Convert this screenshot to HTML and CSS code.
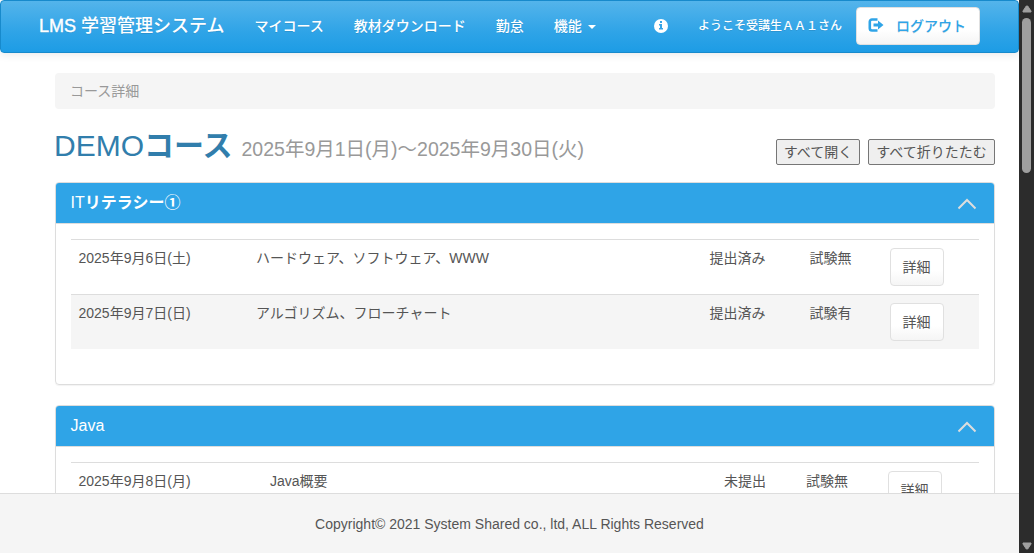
FILE: index.html
```html
<!DOCTYPE html>
<html lang="ja">
<head>
<meta charset="utf-8">
<title>コース詳細 | LMS 学習管理システム</title>
<link rel="stylesheet" href="styles.css">
</head>
<body>
<div class="page">
  <nav class="navbar">
    <a class="brand"><span class="brand-mark">LMS</span> 学習管理システム</a>
    <a class="nav-link">マイコース</a>
    <a class="nav-link">教材ダウンロード</a>
    <a class="nav-link">勤怠</a>
    <a class="nav-link">機能<span class="caret"></span></a>
    <div class="nav-right">
      <svg class="info" viewBox="0 0 14 14"><circle cx="7" cy="7" r="7" fill="#fff"/><path fill="#37a5e7" d="M6 2h2v2H6zM5 5h3v4h1v1.500H5V9h1V6.500H5z"/></svg>
      <span class="welcome">ようこそ受講生ＡＡ１さん</span>
      <a class="btn logout"><svg class="logout-icon" viewBox="0 0 16 14"><path d="M9.500 1.500H4a2.200 2.200 0 0 0-2.200 2.200v6.600A2.200 2.200 0 0 0 4 12.500h5.500" fill="none" stroke="#2fa4e7" stroke-width="2.600"/><path fill="#2fa4e7" d="M5.500 5.500H10V2.600L15.500 7 10 11.400V8.500H5.500z"/></svg><span>ログアウト</span></a>
    </div>
  </nav>
  <main class="content">
    <div class="breadcrumb">コース詳細</div>
    <header class="course">
      <h2 class="title">DEMO<b>コース</b></h2>
      <span class="period">2025年9月1日(月)～2025年9月30日(火)</span>
      <div class="toggles"><button class="toggle">すべて開く</button><button class="toggle toggle-close">すべて折りたたむ</button></div>
    </header>
    <section class="panel">
      <div class="panel-heading"><h3 class="panel-title">IT<b>リテラシー①</b></h3><svg class="chevron" viewBox="0 0 20 12"><path d="M1.500 10.500 10 2l8.500 8.500" fill="none" stroke="#ddd" stroke-width="2"/></svg></div>
      <div class="panel-body">
        <div class="row"><span>2025年9月6日(土)</span><span>ハードウェア、ソフトウェア、WWW</span><span>提出済み</span><span>試験無</span><a class="btn">詳細</a></div>
        <div class="row striped"><span>2025年9月7日(日)</span><span>アルゴリズム、フローチャート</span><span>提出済み</span><span>試験有</span><a class="btn">詳細</a></div>
      </div>
    </section>
    <section class="panel">
      <div class="panel-heading"><h3 class="panel-title">Java</h3><svg class="chevron" viewBox="0 0 20 12"><path d="M1.500 10.500 10 2l8.500 8.500" fill="none" stroke="#ddd" stroke-width="2"/></svg></div>
      <div class="panel-body">
        <div class="row row-java"><span>2025年9月8日(月)</span><span>Java概要</span><span>未提出</span><span>試験無</span><a class="btn">詳細</a></div>
      </div>
    </section>
  </main>
  <footer class="footer">Copyright© 2021 System Shared co., ltd, ALL Rights Reserved</footer>
</div>
<div class="scrollbar">
  <svg class="arrow" viewBox="0 0 10 8"><path d="M4.300 1h1.400L9 6v1H1V6z" fill="#9f9f9f" stroke="#9f9f9f" stroke-linejoin="round"/></svg>
  <div class="thumb"></div>
  <svg class="arrow arrow-down" viewBox="0 0 10 8"><path d="M4.300 7h1.400L9 2V1H1v1z" fill="#9f9f9f" stroke="#9f9f9f" stroke-linejoin="round"/></svg>
</div>
</body>
</html>
```
FILE: styles.css
```css
* { box-sizing: border-box; }
body {
  display: flex;
  height: 553px;
  margin: 0;
  overflow: hidden;
  font: 14px/20px "Liberation Sans", "Noto Sans CJK JP", sans-serif;
  color: #555;
  background: #fff;
}
.page { display: flex; flex-direction: column; width: 1019px; height: 553px; }
.navbar {
  display: flex;
  flex: none;
  align-items: center;
  gap: 30px;
  height: 53px;
  padding: 0 38px 2px;
  border: 1px solid #178acc;
  border-radius: 4px;
  background: linear-gradient(#54b4eb, #2fa4e7 60%, #1d9ce5);
  box-shadow: 0 1px 10px rgba(0, 0, 0, .1);
  color: #fff;
  font-weight: 500;
  text-shadow: 0 1px 0 rgba(0, 0, 0, .1);
  white-space: nowrap;
}
.brand { font-size: 18px; }
.brand-mark { -webkit-text-stroke: .4px #fff; }
.caret {
  display: inline-block;
  margin-left: 6px;
  vertical-align: middle;
  border-top: 4px solid #fff;
  border-left: 4px solid transparent;
  border-right: 4px solid transparent;
}
.nav-right { display: flex; align-items: center; margin-left: auto; }
.info { width: 14px; height: 14px; margin-right: 30px; }
.welcome { margin-right: 14px; padding-top: 1px; font-size: 12px; }
.btn {
  display: flex;
  align-items: center;
  justify-content: center;
  width: 54px;
  height: 38px;
  border: 1px solid #e0e0e0;
  border-radius: 4px;
  background: linear-gradient(#fff, #fff 60%, #f5f5f5);
}
.logout { width: 124px; gap: 12px; padding: 1px 2px 0 0; color: #2fa4e7; }
.logout-icon { width: 16px; height: 14px; margin-bottom: 2px; }
.content { flex: 1; min-height: 0; padding: 20px 24px 0 55px; overflow: hidden; }
.breadcrumb { height: 36px; padding: 8px 15px; border-radius: 4px; background: #f5f5f5; color: #999; }
.course { display: flex; align-items: baseline; height: 73px; padding-top: 20px; white-space: nowrap; }
.title { margin: 0 0 0 -1px; font-size: 30px; font-weight: 400; line-height: 33px; color: #317eac; }
.period { margin-left: 9px; font-size: 19.5px; color: #999; }
.toggles { display: flex; gap: 8px; margin-left: auto; align-self: flex-start; padding-top: 10px; }
.toggle {
  width: 84px;
  height: 26px;
  padding: 0;
  border: 1px solid #767676;
  border-radius: 2px;
  background: #efefef;
  color: #555;
  font: inherit;
}
.toggle-close { width: 127px; }
.panel {
  height: 203px;
  margin-bottom: 20px;
  border: 1px solid #ddd;
  border-radius: 4px;
  box-shadow: 0 1px 1px rgba(0, 0, 0, .05);
}
.panel-heading {
  display: flex;
  align-items: center;
  justify-content: space-between;
  height: 41px;
  padding: 0 17px 0 14.5px;
  border-bottom: 1px solid #ddd;
  border-radius: 3px 3px 0 0;
  background: #2fa4e7;
  color: #fff;
}
.panel-title { margin: 0; font-size: 16px; font-weight: 400; }
.chevron { width: 20px; height: 12px; margin-top: 1px; }
.panel-body { padding: 15px; }
.row {
  display: grid;
  grid-template-columns: 177.5px 453.5px 100px 80px 1fr;
  height: 55px;
  padding: 8px 8px 8px 7.5px;
  border-top: 1px solid #ddd;
}
.row-java { grid-template-columns: 191.5px 454px 82px 81.5px 1fr; }
.striped { background: #f5f5f5; }
.footer {
  flex: none;
  height: 60px;
  padding-top: 20px;
  border-top: 1px solid #ddd;
  background: #f5f5f5;
  text-align: center;
}
.scrollbar {
  display: flex;
  flex-direction: column;
  align-items: center;
  width: 15px;
  height: 553px;
  padding: 5px 0 3px;
  background: #2c2c2c;
}
.arrow { flex: none; width: 10px; height: 8px; }
.arrow-down { margin-top: auto; }
.thumb { width: 9px; height: 155px; margin-top: 5px; border-radius: 5px; background: #9f9f9f; }
```
